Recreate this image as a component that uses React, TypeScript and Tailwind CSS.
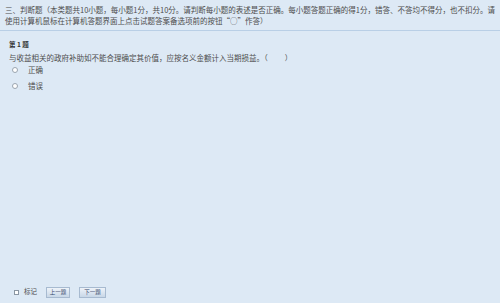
import React from "react";

export default function App() {
  const font = { fontFamily: '"Noto Sans CJK SC", "Noto Sans", sans-serif' };
  return (
    <div
      className="w-[500px] h-[303px] bg-[#dde9f5] text-[#4d4d4d] flex flex-col overflow-hidden relative"
      style={font}
    >
      <div className="px-[5px] pt-[4px] pb-[4px] text-[7.5px] leading-[11px] whitespace-nowrap border-b border-[#b9cfe6]">
        <div>三、判断题（本类题共10小题，每小题1分，共10分。请判断每小题的表述是否正确。每小题答题正确的得1分，错答、不答均不得分，也不扣分。请</div>
        <div>使用计算机鼠标在计算机答题界面上点击试题答案备选项前的按钮“○”作答）</div>
      </div>
      <div className="px-[9px] pt-[9px] flex flex-col">
        <div className="text-[6.5px] leading-[9px] font-bold text-[#333] whitespace-pre">第 1 题</div>
        <div className="mt-[4px] text-[7.5px] leading-[10px] whitespace-nowrap">
          与收益相关的政府补助如不能合理确定其价值，应按名义金额计入当期损益。（<span className="inline-block w-[17px]" />）
        </div>
        <div className="mt-[2px] flex flex-col gap-[6px] pl-[3px]">
          <label className="flex items-center h-[10px]">
            <span className="w-[6px] h-[6px] rounded-full border border-[#9aa5b0] bg-white" />
            <span className="ml-[10px] text-[7.5px]">正确</span>
          </label>
          <label className="flex items-center h-[10px]">
            <span className="w-[6px] h-[6px] rounded-full border border-[#9aa5b0] bg-white" />
            <span className="ml-[10px] text-[7.5px]">错误</span>
          </label>
        </div>
      </div>
      <div className="mt-auto mb-[5px] pl-[14px] flex items-center h-[12px]">
        <span className="w-[5px] h-[5px] border border-[#8a96a3] bg-white" />
        <span className="ml-[5px] text-[6.5px]">标记</span>
        <button className="ml-[9px] w-[24px] h-[11px] text-[5.5px] leading-[9px] text-[#34476b] border border-[#a7bad0] bg-gradient-to-b from-[#eef3f9] to-[#c8d7e7]">
          上一题
        </button>
        <button className="ml-[9px] w-[27px] h-[11px] text-[5.5px] leading-[9px] text-[#34476b] border border-[#a7bad0] bg-gradient-to-b from-[#eef3f9] to-[#c8d7e7]">
          下一题
        </button>
      </div>
    </div>
  );
}
